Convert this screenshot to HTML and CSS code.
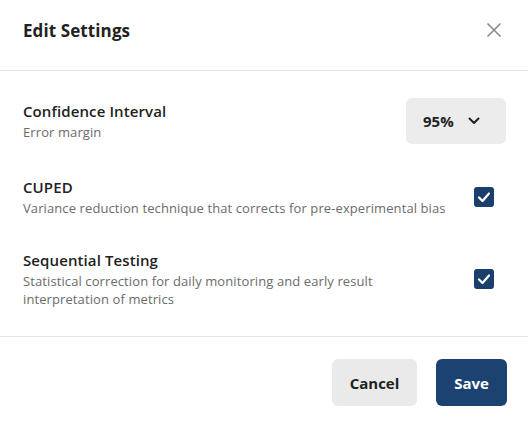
FILE: index.html
```html
<!DOCTYPE html>
<html lang="en">
<head>
  <meta charset="UTF-8" />
  <title>Edit Settings</title>
  <link rel="stylesheet" href="styles.css">
</head>
<body>
  <div class="modal">
    <div class="modal-header">
      <h2>Edit Settings</h2>
      <button class="close-btn" aria-label="Close">
        <svg width="16" height="16" viewBox="0 0 16 16"><path d="M1.5 1.5 L14.5 14.5 M14.5 1.5 L1.5 14.5" stroke="#8a8a8a" stroke-width="1.6" fill="none"/></svg>
      </button>
    </div>

    <div class="modal-body">
      <div class="setting-row">
        <div class="setting-text">
          <div class="setting-title">Confidence Interval</div>
          <div class="setting-desc">Error margin</div>
        </div>
        <button class="select-btn">
          <span>95%</span>
          <svg width="12" height="8" viewBox="0 0 12 8"><path d="M1.5 1.5 L6 6 L10.5 1.5" stroke="#222" stroke-width="2" fill="none" stroke-linecap="round" stroke-linejoin="round"/></svg>
        </button>
      </div>

      <div class="setting-row">
        <div class="setting-text">
          <div class="setting-title">CUPED</div>
          <div class="setting-desc">Variance reduction technique that corrects for pre-experimental bias</div>
        </div>
        <span class="checkbox">
          <svg width="14" height="12" viewBox="0 0 14 12"><path d="M2 6.5 L5.5 10 L12 2.5" stroke="#fff" stroke-width="2.2" fill="none" stroke-linecap="round" stroke-linejoin="round"/></svg>
        </span>
      </div>

      <div class="setting-row">
        <div class="setting-text">
          <div class="setting-title">Sequential Testing</div>
          <div class="setting-desc">Statistical correction for daily monitoring and early result interpretation of metrics</div>
        </div>
        <span class="checkbox">
          <svg width="14" height="12" viewBox="0 0 14 12"><path d="M2 6.5 L5.5 10 L12 2.5" stroke="#fff" stroke-width="2.2" fill="none" stroke-linecap="round" stroke-linejoin="round"/></svg>
        </span>
      </div>
    </div>

    <div class="modal-footer">
      <button class="btn btn-cancel">Cancel</button>
      <button class="btn btn-save">Save</button>
    </div>
  </div>
</body>
</html>
```

FILE: styles.css
```css
* { box-sizing: border-box; }
body {
  margin: 0;
  font-family: 'Open Sans', sans-serif;
  letter-spacing: 0.1px;
  background: #fff;
  color: #222;
}
.modal {
  width: 528px;
}
.modal-header {
  height: 71px;
  display: flex;
  align-items: center;
  justify-content: space-between;
  padding: 0 26px 0 23px;
  border-bottom: 1px solid #e6e6e6;
}
.modal-header h2 {
  margin: 0 0 10px;
  font-size: 17px;
  font-weight: 700;
  color: #222;
}
.close-btn {
  background: none;
  border: none;
  padding: 0;
  margin-bottom: 10px;
  display: flex;
  cursor: pointer;
}
.modal-body {
  padding: 27px 22px 28px 23px;
  display: flex;
  flex-direction: column;
  gap: 33px;
  border-bottom: 1px solid #e6e6e6;
}
.setting-row {
  display: flex;
  align-items: center;
  justify-content: space-between;
  gap: 20px;
}
.setting-text {
  flex: 1;
}
.setting-title {
  font-size: 15px;
  font-weight: 600;
  line-height: 20px;
  color: #222;
}
.setting-desc {
  margin-top: 2px;
  font-size: 13px;
  line-height: 18px;
  color: #6b6b6b;
}
.select-btn {
  width: 100px;
  height: 46px;
  display: flex;
  align-items: center;
  gap: 14px;
  padding: 0 0 0 17px;
  background: #ececec;
  border: none;
  border-radius: 6px;
  font-family: inherit;
  font-size: 15px;
  font-weight: 700;
  color: #222;
}
.checkbox {
  width: 20px;
  height: 20px;
  margin-right: 12px;
  border-radius: 3px;
  background: #1b3f6d;
  display: flex;
  align-items: center;
  justify-content: center;
}
.modal-footer {
  display: flex;
  justify-content: flex-end;
  gap: 19px;
  padding: 22px 21px;
}
.btn {
  height: 47px;
  padding: 0 17px;
  border: none;
  border-radius: 6px;
  font-family: inherit;
  font-size: 15px;
  font-weight: 700;
  cursor: pointer;
}
.btn-cancel {
  width: 85px;
  background: #eaeaea;
  color: #222;
}
.btn-save {
  width: 71px;
  background: #1c4272;
  color: #fff;
}
```
